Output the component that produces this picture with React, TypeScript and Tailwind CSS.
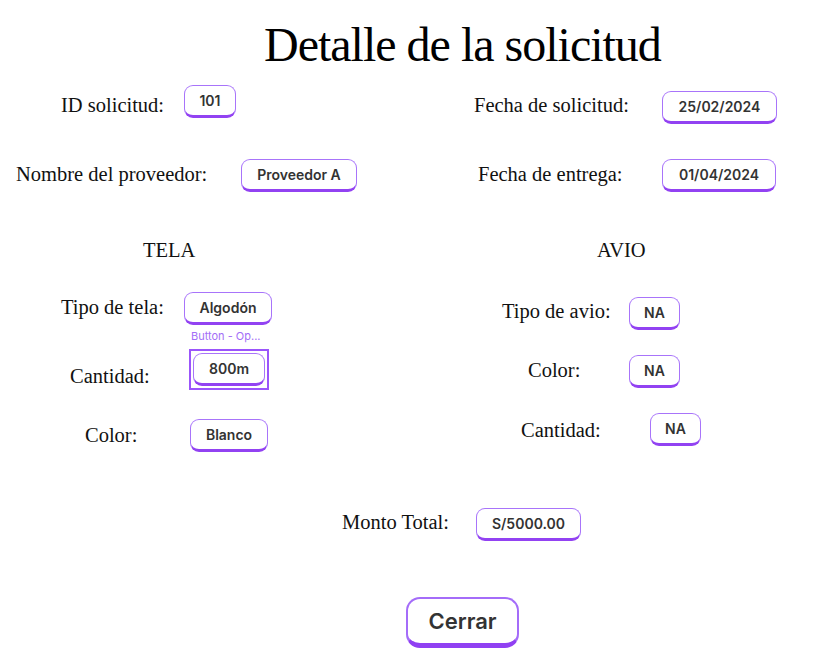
import React from "react";

const serif = "font-['Liberation_Serif',serif]";
const sans = "font-['Inter',sans-serif]";

function Label({ text, ml, mt, w }: { text: string; ml: number; mt: number; w: number }) {
  return (
    <span
      className={`block shrink-0 whitespace-nowrap text-[20.5px] leading-none text-[#111] ${serif}`}
      style={{ marginLeft: ml, marginTop: mt, width: w }}
    >
      {text}
    </span>
  );
}

function Btn({ text, ml = 0, mt = 0, w }: { text: string; ml?: number; mt?: number; w: number }) {
  return (
    <div
      className={`flex h-[33px] shrink-0 items-center justify-center rounded-[9px] border-[1.5px] border-b-[3.5px] border-[#a874fa] border-b-[#9242f2] bg-white text-[14px] font-semibold leading-none text-[#333] ${sans}`}
      style={{ marginLeft: ml, marginTop: mt, width: w }}
    >
      {text}
    </div>
  );
}

export default function App() {
  return (
    <div className="flex h-[669px] w-[813px] flex-col overflow-hidden bg-white">
      {/* Title */}
      <h1 className={`ml-[264px] mt-[21px] whitespace-nowrap text-[48px] font-normal leading-none tracking-[-1px] text-black ${serif}`}>
        Detalle de la solicitud
      </h1>

      {/* Row 1 */}
      <div className="mt-[15px] flex h-[40px] items-start">
        <Label text="ID solicitud:" ml={61} mt={11} w={100} />
        <Btn text="101" ml={23} mt={1} w={52} />
        <Label text="Fecha de solicitud:" ml={238} mt={11} w={151} />
        <Btn text="25/02/2024" ml={37} mt={7} w={115} />
      </div>

      {/* Row 2 */}
      <div className="flex h-[68px] items-start">
        <Label text="Nombre del proveedor:" ml={16} mt={40} w={191} />
        <Btn text="Proveedor A" ml={34} mt={35} w={116} />
        <Label text="Fecha de entrega:" ml={121} mt={40} w={143} />
        <Btn text="01/04/2024" ml={41} mt={35} w={114} />
      </div>

      {/* Section headings */}
      <div className="flex h-[68px] items-start">
        <Label text="TELA" ml={143} mt={48} w={53} />
        <Label text="AVIO" ml={401} mt={48} w={48} />
      </div>

      {/* Two columns */}
      <div className="flex h-[192px]">
        {/* TELA */}
        <div className="flex w-[406px] shrink-0 flex-col">
          <div className="flex h-[65px] items-start">
            <Label text="Tipo de tela:" ml={61} mt={37} w={101} />
            <Btn text="Algodón" ml={22} mt={32} w={88} />
          </div>
          <div className="flex h-[24px] items-start">
            <span className={`ml-[191px] mt-[6px] whitespace-nowrap text-[11px] leading-none text-[#a36ef7] ${sans}`}>
              Button - Op...
            </span>
          </div>
          <div className="flex h-[41px] items-start">
            <Label text="Cantidad:" ml={70} mt={17} w={82} />
            <div className="ml-[37px] flex h-[41px] w-[80px] shrink-0 items-start border-2 border-[#9b55fb] p-[2px]">
              <Btn text="800m" w={72} />
            </div>
          </div>
          <div className="flex h-[62px] items-start">
            <Label text="Color:" ml={85} mt={35} w={52} />
            <Btn text="Blanco" ml={53} mt={29} w={78} />
          </div>
        </div>

        {/* AVIO */}
        <div className="flex flex-1 flex-col">
          <div className="flex h-[70px] items-start">
            <Label text="Tipo de avio:" ml={96} mt={41} w={107} />
            <Btn text="NA" ml={20} mt={37} w={51} />
          </div>
          <div className="flex h-[58px] items-start">
            <Label text="Color:" ml={122} mt={30} w={53} />
            <Btn text="NA" ml={48} mt={25} w={51} />
          </div>
          <div className="flex h-[58px] items-start">
            <Label text="Cantidad:" ml={115} mt={32} w={80} />
            <Btn text="NA" ml={49} mt={25} w={51} />
          </div>
        </div>
      </div>

      {/* Monto total */}
      <div className="flex h-[90px] items-start">
        <Label text="Monto Total:" ml={342} mt={60} w={108} />
        <Btn text="S/5000.00" ml={26} mt={56} w={105} />
      </div>

      {/* Cerrar */}
      <div className="flex items-start">
        <button
          className={`ml-[406px] mt-[55px] flex h-[51px] w-[113px] items-center justify-center rounded-[14px] border-[2.5px] border-b-[5px] border-[#a46cf9] border-b-[#9040f2] bg-white text-[22px] font-semibold leading-none text-[#333] ${sans}`}
        >
          Cerrar
        </button>
      </div>
    </div>
  );
}
